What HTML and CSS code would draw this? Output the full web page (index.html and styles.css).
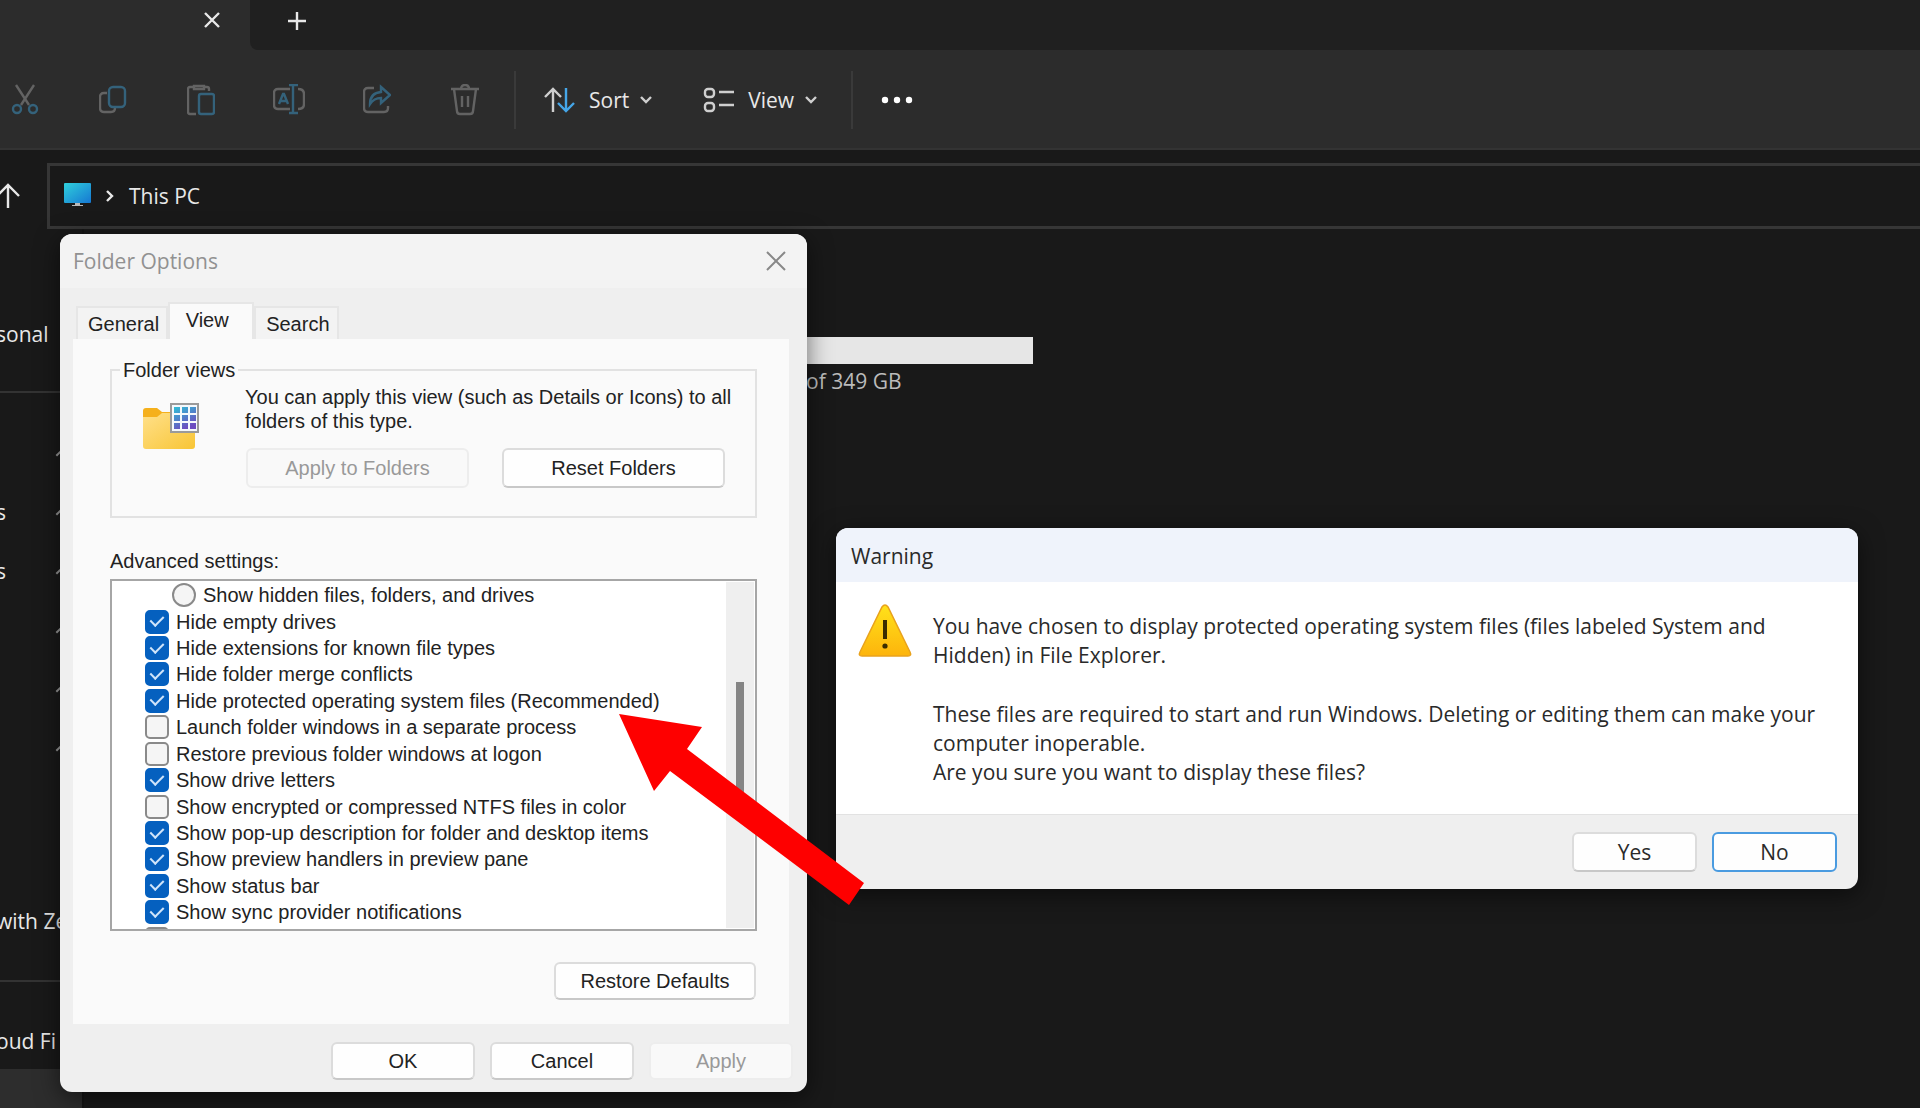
FILE: index.html
```html
<!DOCTYPE html>
<html lang="en">
<head>
<meta charset="utf-8">
<title>This PC</title>
<link rel="stylesheet" href="styles.css">
</head>
<body>
<div class="explorer">
  <header class="tabstrip">
    <div class="tab">
      <button class="icon-button" aria-label="Close tab"><svg width="18" height="18" viewBox="0 0 18 18"><path d="M2 2 16 16M16 2 2 16"/></svg></button>
    </div>
    <button class="icon-button new-tab" aria-label="New tab"><svg width="20" height="20" viewBox="0 0 20 20"><path d="M10 1V19M1 10H19"/></svg></button>
  </header>

  <div class="toolbar">
    <div class="tools">
      <button class="icon-button" aria-label="Cut"><svg width="28" height="32" viewBox="0 0 28 32"><path class="grey" d="M5 1 18 21M23 1 10 21"/><circle class="blue" cx="6" cy="25" r="4"/><circle class="blue" cx="22" cy="25" r="4"/></svg></button>
      <button class="icon-button" aria-label="Copy"><svg width="28" height="32" viewBox="0 0 28 32"><path class="grey" d="M8 9H5Q1 9 1 13V24Q1 28 5 28H12Q16 28 16 24"/><rect class="blue" x="10" y="3" width="16" height="20" rx="4"/></svg></button>
      <button class="icon-button" aria-label="Paste"><svg width="28" height="32" viewBox="0 0 28 32"><path class="grey" d="M9 30H3Q1 30 1 28V5Q1 3 3 3H7M17 3H20Q22 3 22 5V7M7 2H17V5H7Z"/><rect class="blue" x="12" y="10" width="15" height="20" rx="2"/></svg></button>
      <button class="icon-button" aria-label="Rename"><svg width="32" height="32" viewBox="0 0 32 32"><path class="grey" d="M17 5H5Q1 5 1 9V21Q1 25 5 25H17M25 5Q31 5 31 10V20Q31 25 25 25"/><path class="blue" d="M16 1H25M20 1V29M16 29H25M6 20 10 10H11L15 20M8 17H13"/></svg></button>
      <button class="icon-button" aria-label="Share"><svg width="28" height="32" viewBox="0 0 28 32"><path class="grey" d="M11 4H5Q1 4 1 8V24Q1 28 5 28H21Q25 28 25 24V22"/><path class="blue" d="M18 3 27 11 18 19V14Q11 14 7 20Q7 9 18 8Z"/></svg></button>
      <button class="icon-button" aria-label="Delete"><svg width="28" height="32" viewBox="0 0 28 32"><path class="grey" d="M0 5H28M3 5 6 27Q6 30 9 30H19Q22 30 22 27L25 5M10 5Q10 1 14 1T18 5M11 12V23M17 12V23"/></svg></button>
    </div>
    <div class="tool-menu sort">
      <button class="text-button"><svg width="32" height="26" viewBox="0 0 32 26"><path class="light" d="M9 25V2M1 10 9 2 17 10"/><path class="sky" d="M22 1V24M14 16 22 24 30 16"/></svg><span>Sort</span><svg width="14" height="10" viewBox="0 0 14 10"><path class="light" d="M2 2 7 7 12 2"/></svg></button>
      <button class="text-button"><svg width="32" height="26" viewBox="0 0 32 26"><rect class="light" x="2" y="2" width="9" height="8" rx="3"/><rect class="light" x="2" y="16" width="9" height="8" rx="3"/><path class="light" d="M16 5H31M16 18H31"/></svg><span>View</span><svg width="14" height="10" viewBox="0 0 14 10"><path class="light" d="M2 2 7 7 12 2"/></svg></button>
    </div>
    <div class="tool-menu">
      <button class="icon-button" aria-label="More"><svg class="dots" width="32" height="8" viewBox="0 0 32 8"><circle cx="4" cy="4" r="3.2"/><circle cx="16" cy="4" r="3.2"/><circle cx="28" cy="4" r="3.2"/></svg></button>
    </div>
  </div>

  <div class="navigation">
    <button class="icon-button up" aria-label="Up"><svg width="38" height="26" viewBox="0 0 38 26"><path d="M8 25V2M-3 13 8 2 19 13"/></svg></button>
    <nav class="address">
      <svg width="28" height="26" viewBox="0 0 28 26"><defs><linearGradient id="screen" x2="1" y2="1"><stop stop-color="#2fd0dc"/><stop offset="1" stop-color="#1677d2"/></linearGradient></defs><rect x="0" y="0" width="27" height="20" rx="1" fill="url(#screen)"/><path d="M11 20H16V22H19V23H8V22H11Z" fill="#b8b8b8"/></svg>
      <svg class="crumb" width="10" height="14" viewBox="0 0 10 14"><path d="M2 2 7 7 2 12"/></svg>
      <a href="#">This PC</a>
    </nav>
  </div>

  <div class="content">
    <aside class="sidebar">
      <div class="side-row personal">sonal</div>
      <div class="pins">
        <div class="side-row"><i class="pin"></i></div>
        <div class="side-row">s<i class="pin"></i></div>
        <div class="side-row">s<i class="pin"></i></div>
        <div class="side-row"><i class="pin"></i></div>
        <div class="side-row"><i class="pin"></i></div>
        <div class="side-row"><i class="pin"></i></div>
      </div>
      <div class="side-row with">with Ze</div>
      <div class="side-row cloud">oud Fi</div>
      <div class="selected"></div>
    </aside>
    <section class="drive">
      <div class="capacity"></div>
      <p>of 349 GB</p>
    </section>
  </div>
</div>

<section class="dialog options" role="dialog" aria-labelledby="options-title">
  <header class="options-head">
    <h2 id="options-title">Folder Options</h2>
    <button class="icon-button" aria-label="Close"><svg width="20" height="22" viewBox="0 0 20 22"><path d="M1 2 19 20M19 2 1 20"/></svg></button>
  </header>
  <div class="options-tabs" role="tablist">
    <button role="tab">General</button>
    <button role="tab" class="active" aria-selected="true">View</button>
    <button role="tab">Search</button>
  </div>
  <div class="panel">
    <fieldset class="views">
      <legend>Folder views</legend>
      <svg width="58" height="50" viewBox="0 0 58 50"><defs><linearGradient id="folder" x2="1" y2="1"><stop stop-color="#ffe08a"/><stop offset="1" stop-color="#f8c535"/></linearGradient><linearGradient id="tiles" x2=".5" y2="1"><stop stop-color="#2fbfd6"/><stop offset="1" stop-color="#6d4cc0"/></linearGradient></defs><path d="M1 8Q1 5 4 5H15L20 9H50V22H1Z" fill="#f5b01c"/><path d="M1 14H15L20 10H53V43Q53 46 50 46H4Q1 46 1 43Z" fill="url(#folder)"/><rect x="29" y="1" width="27" height="28" fill="#f4f8fc" stroke="#9a9a9a" stroke-width="2"/><path d="M32 4H38V10H32ZM40 4H46V10H40ZM48 4H54V10H48ZM32 12H38V18H32ZM40 12H46V18H40ZM48 12H54V18H48ZM32 20H38V26H32ZM40 20H46V26H40ZM48 20H54V26H48Z" fill="url(#tiles)"/></svg>
      <div class="views-body">
        <p>You can apply this view (such as Details or Icons) to all folders of this type.</p>
        <div class="views-actions">
          <button class="button" disabled>Apply to Folders</button>
          <button class="button">Reset Folders</button>
        </div>
      </div>
    </fieldset>
    <h3 id="advanced">Advanced settings:</h3>
    <div class="list" role="group" aria-labelledby="advanced">
      <div class="settings">
        <label class="nested"><input type="radio" name="hidden-files">Show hidden files, folders, and drives</label>
        <label><input type="checkbox" checked>Hide empty drives</label>
        <label><input type="checkbox" checked>Hide extensions for known file types</label>
        <label><input type="checkbox" checked>Hide folder merge conflicts</label>
        <label><input type="checkbox" checked>Hide protected operating system files (Recommended)</label>
        <label><input type="checkbox">Launch folder windows in a separate process</label>
        <label><input type="checkbox">Restore previous folder windows at logon</label>
        <label><input type="checkbox" checked>Show drive letters</label>
        <label><input type="checkbox">Show encrypted or compressed NTFS files in color</label>
        <label><input type="checkbox" checked>Show pop-up description for folder and desktop items</label>
        <label><input type="checkbox" checked>Show preview handlers in preview pane</label>
        <label><input type="checkbox" checked>Show status bar</label>
        <label><input type="checkbox" checked>Show sync provider notifications</label>
        <label><input type="checkbox" aria-label="Next setting"></label>
      </div>
      <div class="scrollbar"><div class="thumb"></div></div>
    </div>
    <button class="button restore">Restore Defaults</button>
  </div>
  <footer class="options-foot">
    <button class="button">OK</button>
    <button class="button">Cancel</button>
    <button class="button" disabled>Apply</button>
  </footer>
</section>

<section class="dialog warning" role="alertdialog" aria-labelledby="warning-title">
  <header><h2 id="warning-title">Warning</h2></header>
  <div class="warning-body">
    <svg width="54" height="54" viewBox="0 0 54 54"><defs><linearGradient id="amber" x2="0" y2="1"><stop stop-color="#ffe21a"/><stop offset="1" stop-color="#fdb40c"/></linearGradient></defs><path d="M24 3Q27 -1 30 3L52 48Q54 52 50 52H4Q0 52 2 48Z" fill="url(#amber)" stroke="#e9a21c" stroke-width="1.5"/><path d="M27 16V35" stroke="#3a2c00" stroke-width="4"/><circle cx="27" cy="42" r="2.6" fill="#3a2c00"/></svg>
    <div>
      <p>You have chosen to display protected operating system files (files labeled System and<br>Hidden) in File Explorer.</p>
      <p>These files are required to start and run Windows. Deleting or editing them can make your<br>computer inoperable.<br>Are you sure you want to display these files?</p>
    </div>
  </div>
  <footer>
    <button class="button">Yes</button>
    <button class="button default">No</button>
  </footer>
</section>

<svg class="pointer" width="246" height="192" viewBox="0 0 246 192" aria-hidden="true"><path d="M0 0 83 13 68 35 245 169 230 191 51 57 35 77Z"/></svg>
</body>
</html>
```
FILE: styles.css
```css
* { box-sizing: border-box; }

body {
  margin: 0;
  position: relative;
  min-height: 100vh;
  overflow: hidden;
  background: #191919;
  color: #e8e8e8;
  font: 21px/24px "Open Sans", "Noto Sans", sans-serif;
}

h2, h3, p { margin: 0; font-size: inherit; font-weight: 400; }
button, input { margin: 0; font: inherit; color: inherit; }
svg { display: block; flex: none; }
.explorer svg path, .explorer svg rect, .explorer svg circle { stroke-width: 2.4; }

.icon-button, .text-button {
  display: flex;
  align-items: center;
  padding: 0;
  border: 0;
  background: none;
}
.icon-button path { fill: none; stroke: #e8e8e8; }

/* File Explorer window */
.explorer { display: flex; flex-direction: column; min-height: 100vh; }

.tabstrip { display: flex; height: 50px; background: #2c2c2c; }
.tab {
  display: flex;
  justify-content: flex-end;
  width: 250px;
  padding: 0 29px 10px 0;
}
.new-tab {
  flex: 1;
  padding: 0 0 8px 37px;
  border-radius: 0 0 0 8px;
  background: #202020;
}

.toolbar {
  display: flex;
  align-items: center;
  height: 100px;
  padding: 2px 0 0 11px;
  border-bottom: 2px solid #333;
  background: #2c2c2c;
}
.tools { display: flex; gap: 60px; margin-right: 35px; }
.tools button { width: 28px; justify-content: center; }
.explorer .grey { fill: none; stroke: #636363; }
.explorer .blue { fill: none; stroke: #34627b; }
.explorer .light { fill: none; stroke: #cfcfcf; }
.explorer .sky { fill: none; stroke: #45a6e8; }
.dots { fill: #fff; }
.tool-menu {
  display: flex;
  align-items: center;
  height: 58px;
  padding-left: 28px;
  border-left: 2px solid #3a3a3a;
}
.sort { gap: 50px; width: 337px; }
.text-button span { margin: 0 10px 0 13px; }

.navigation { display: flex; align-items: center; padding-top: 13px; }
.up { width: 47px; }
.address {
  display: flex;
  flex: 1;
  align-items: center;
  height: 66px;
  padding-left: 14px;
  border: 3px solid #363636;
  border-right: 0;
}
.crumb { margin: 0 14px 0 13px; fill: none; stroke: #e8e8e8; }
.address a { color: inherit; text-decoration: none; }

.content { display: flex; flex: 1; }
.sidebar { display: flex; flex-direction: column; width: 84px; border-right: 2px solid #151515; }
.side-row { display: flex; align-items: center; height: 59px; white-space: nowrap; text-indent: -4px; }
.personal { height: 164px; padding-top: 48px; border-bottom: 2px solid #333; }
.pins { padding-top: 30px; }
.pins .side-row { width: 68px; }
.pin { width: 12px; height: 6px; margin-left: auto; border-top: 2px solid #999; transform: rotate(-45deg); }
.with { height: 205px; padding-top: 84px; border-bottom: 2px solid #333; }
.cloud { height: 87px; padding-top: 30px; }
.selected { flex: 1; background: #2d2d2d; }

.drive { width: 949px; padding-top: 108px; }
.capacity { height: 27px; background: #e6e6e6; }
.drive p { padding: 5px 0 0 722px; color: #bbb; }

/* Dialog windows */
.dialog {
  position: absolute;
  overflow: hidden;
  border-radius: 12px;
  background: #efefef;
  color: #222;
  box-shadow: 0 6px 24px #0008;
}
.button {
  height: 40px;
  padding: 0;
  border: 2px solid #dcdcdc;
  border-bottom-color: #c8c8c8;
  border-radius: 6px;
  background: #fefefe;
}
.button:disabled { border-color: #ededed; background: #f9f9f9; color: #999; }

.options {
  left: 60px;
  top: 234px;
  width: 747px;
  height: 858px;
  padding: 0 14px 0 13px;
  font: 20px/24px "Liberation Sans", Arial, sans-serif;
}
.options-head {
  display: flex;
  align-items: center;
  justify-content: space-between;
  height: 54px;
  margin: 0 -14px 14px -13px;
  padding: 0 21px 0 13px;
  background: #f3f3f3;
  color: #919191;
  font: 21px/24px "Open Sans", "Noto Sans", sans-serif;
}
.options-head path { stroke: #888; stroke-width: 2; }

.options-tabs { display: flex; align-items: flex-end; height: 37px; padding-left: 3px; }
.options-tabs button {
  height: 33px;
  padding: 1px 7px 0 10px;
  border: 2px solid #e6e6e6;
  border-bottom: 0;
  background: #f3f3f3;
}
.options-tabs .active { height: 37px; width: 86px; padding: 0 8px 3px 0; background: #fafafa; }

.panel {
  height: 685px;
  margin-right: 4px;
  padding: 19px 32px 0 37px;
  background: #fafafa;
}
.views {
  display: flex;
  height: 160px;
  margin: 0;
  padding: 11px 0 0 30px;
  border: 2px solid #e2e2e2;
}
.views legend { margin-left: -22px; padding: 0 3px; }
.views-body { margin: -8px 0 0 45px; }
.views svg { margin-top: 10px; }
.views-actions { display: flex; justify-content: space-between; width: 480px; padding: 15px 0 0 1px; }
.views-actions .button { width: 223px; }
.panel h3 { margin-top: 31px; padding-bottom: 4px; }

.list {
  display: flex;
  justify-content: space-between;
  height: 352px;
  margin-top: 2px;
  padding: 1px 1px 0 33px;
  overflow: hidden;
  border: 2px solid #a6a6a6;
  background: #fff;
}
.settings { display: grid; grid-template-rows: repeat(14, 1fr); height: 370px; }
.settings label { display: flex; align-items: center; gap: 7px; white-space: nowrap; }
.settings .nested { padding-left: 27px; }
.settings input {
  display: grid;
  place-items: center;
  width: 24px;
  height: 24px;
  appearance: none;
  border: 2px solid #8a8a8a;
  border-radius: 5px;
  background: #f5f5f5;
}
.settings input[type="radio"] { border-radius: 50%; }
.settings input:checked { border-color: #0560bf; background: #0560bf; }
.settings input:checked::after {
  content: "";
  width: 6px;
  height: 11px;
  margin-top: -4px;
  border: solid #cfe4fa;
  border-width: 0 2px 2px 0;
  transform: rotate(45deg);
}
.scrollbar { width: 28px; height: 346px; padding: 100px 10px 0; background: #efefef; }
.thumb { height: 125px; background: #858585; }
.restore { display: block; width: 202px; height: 38px; margin: 31px 1px 0 auto; }

.options-foot { display: flex; justify-content: flex-end; gap: 15px; padding-top: 18px; }
.options-foot .button { width: 144px; height: 38px; }

.warning { left: 836px; top: 528px; width: 1022px; color: #2a2a2a; }
.warning header { height: 54px; padding: 16px 15px 0; background: #eff3fb; }
.warning-body {
  display: flex;
  gap: 21px;
  height: 233px;
  padding: 22px 22px 0;
  border-bottom: 1px solid #e2e2e2;
  background: #fff;
  line-height: 29px;
}
.warning-body div { padding-top: 8px; }
.warning-body p + p { margin-top: 30px; }
.warning footer { display: flex; justify-content: flex-end; gap: 15px; padding: 17px 21px; }
.warning footer .button { width: 125px; }
.warning footer .default { border-color: #4a9be0; }

.pointer { position: absolute; left: 619px; top: 714px; fill: #fe0000; }
```
